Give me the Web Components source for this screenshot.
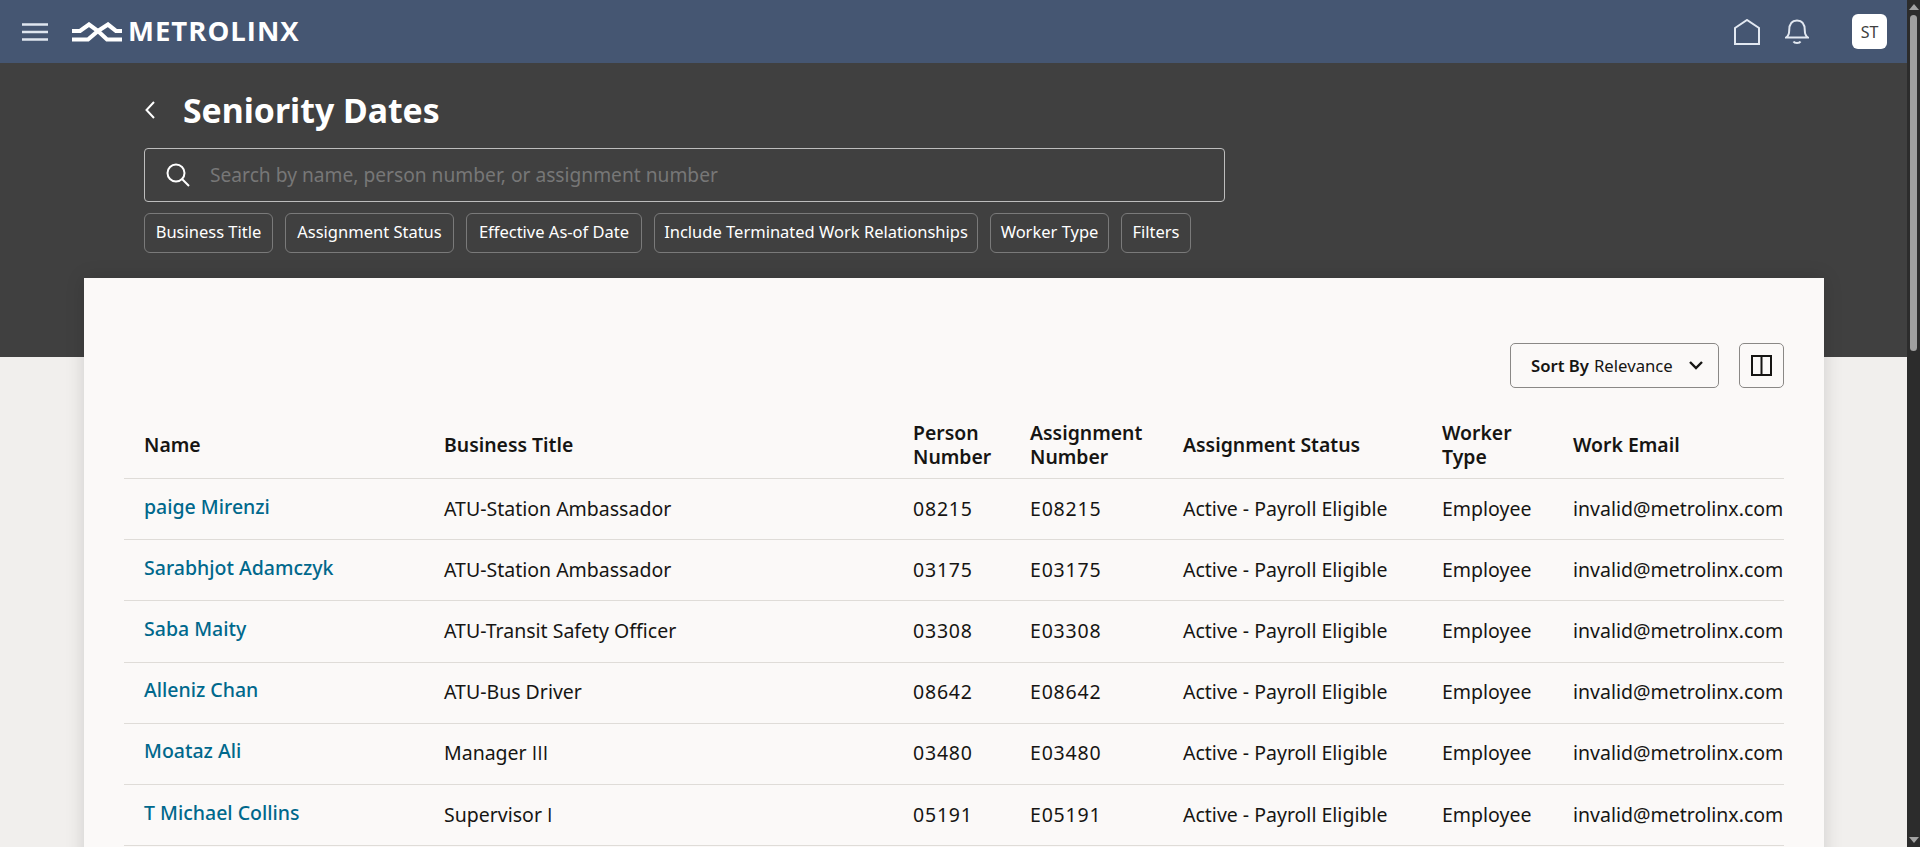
<!DOCTYPE html>
<html lang="en">
<head>
<meta charset="utf-8">
<title>Seniority Dates</title>
<style>
  html, body { margin: 0; height: 100%; overflow: hidden; }
  body { font-family: "Noto Sans", "Open Sans", sans-serif; color: #161513; background: #f1efed; }
</style>
</head>
<body>
<app-shell>
  <top-bar></top-bar>
  <page-band heading="Seniority Dates">
    <search-box placeholder="Search by name, person number, or assignment number"></search-box>
    <filter-chip width="129">Business Title</filter-chip>
    <filter-chip width="169">Assignment Status</filter-chip>
    <filter-chip width="176">Effective As-of Date</filter-chip>
    <filter-chip width="324">Include Terminated Work Relationships</filter-chip>
    <filter-chip width="119">Worker Type</filter-chip>
    <filter-chip width="70">Filters</filter-chip>
  </page-band>
  <results-card>
    <results-toolbar></results-toolbar>
    <results-table></results-table>
  </results-card>
</app-shell>

<script>
// Small helper, every element just sets its shadow markup once
class BaseEl extends HTMLElement {
    connectedCallback() {
        if (!this.shadowRoot) {
            this.attachShadow({ mode: 'open' });
            this.shadowRoot.innerHTML = this.render();
        }
    }
}

class AppShell extends BaseEl {
    render() {
        return `
            <style>
                :host { display: flex; width: 1920px; height: 847px; overflow: hidden; }
                .page { width: 1907px; height: 847px; overflow: hidden; flex: none; }
                .bar { width: 13px; flex: none; background: #2c2c2c; display: flex; flex-direction: column; align-items: center; }
                .up, .down { width: 0; height: 0; border-left: 5px solid transparent; border-right: 5px solid transparent; flex: none; }
                .up { border-bottom: 6px solid #a3a3a3; margin-top: 4px; }
                .down { border-top: 6px solid #a3a3a3; margin-top: auto; margin-bottom: 4px; }
                .thumb { width: 7px; height: 336px; margin-top: 5px; background: #9f9f9f; border-radius: 4px; }
            </style>
            <div class="page"><slot></slot></div>
            <div class="bar"><span class="up"></span><span class="thumb"></span><span class="down"></span></div>
        `;
    }
}

class TopBar extends BaseEl {
    render() {
        return `
            <style>
                :host { display: flex; align-items: center; height: 63px; background: #455672; color: #fff; padding: 0 20px 0 22px; }
                svg { display: block; flex: none; }
                .logo { margin-left: 23px; }
                .brand { margin: 0 0 2px 6px; font: 700 27.500px/1 "Open Sans", sans-serif; letter-spacing: 1px; }
                .right { margin-left: auto; display: flex; align-items: center; }
                .bell { margin-left: 25px; }
                .avatar { margin-left: 43px; width: 35px; height: 35px; border-radius: 6px; background: #fff; color: #404040;
                    display: flex; align-items: center; justify-content: center; font-size: 16px; }
            </style>
            <svg width="26" height="18" viewBox="0 0 26 18" fill="none" stroke="#dfe6f0" stroke-width="2.400"><path d="M0 1.500h26M0 9h26M0 16.500h26"/></svg>
            <svg class="logo" width="51" height="20" viewBox="0 0 51 20" fill="none" stroke="#fff" stroke-width="4.200">
                <path d="M1 9H9L18 2.500 27 9 36 17.500H51"/>
                <path d="M1 17.500H17L27 9 37 2.500 45 9H51"/>
            </svg>
            <span class="brand">METROLINX</span>
            <div class="right">
                <svg width="26" height="26" viewBox="0 0 26 26" fill="none" stroke="#e2e8f1" stroke-width="2"><path d="M1 9 13 1 25 9V25H1z"/></svg>
                <svg class="bell" width="24" height="26" viewBox="0 0 24 26" fill="none" stroke="#e2e8f1" stroke-width="2"><path d="M1 18.500c2.500-1.500 3.200-3.500 3.200-7C4.200 5 7 1.500 12 1.500s7.800 3.500 7.800 10c0 3.500.7 5.500 3.200 7z"/><path d="M8.500 22.500c1 2 6 2 7 0"/></svg>
                <div class="avatar">ST</div>
            </div>
        `;
    }
}

class PageBand extends BaseEl {
    render() {
        return `
            <style>
                :host { display: block; height: 294px; background: #404040; color: #fff; padding: 0 144px; box-sizing: border-box; }
                .head { display: flex; align-items: center; box-sizing: border-box; height: 85px; padding-top: 9px; }
                svg { display: block; margin-right: 28px; margin-left: 1px; }
                h1 { margin: 0; font-size: 33.800px; line-height: 40px; font-weight: 700; }
                .filters { display: flex; flex-wrap: wrap; gap: 11px 12px; width: 1081px; }
                ::slotted(search-box) { flex: 0 0 100%; }
            </style>
            <div class="head">
                <svg width="10" height="18" viewBox="0 0 10 18" fill="none" stroke="#fff" stroke-width="2"><path d="M9 1 1.500 9 9 17"/></svg>
                <h1>${this.getAttribute('heading')}</h1>
            </div>
            <div class="filters"><slot></slot></div>
        `;
    }
}

class SearchBox extends BaseEl {
    render() {
        return `
            <style>
                :host { display: flex; align-items: center; box-sizing: border-box; height: 54px; border: 1px solid #bdbdbd; border-radius: 4px; padding-left: 21px; }
                svg { display: block; flex: none; }
                span { margin: 0 0 1px 20px; font-size: 19.200px; color: #777; }
            </style>
            <svg width="24" height="24" viewBox="0 0 24 24" fill="none" stroke="#fff" stroke-width="2"><circle cx="10" cy="10" r="8.500"/><path d="m16 16 7 7"/></svg>
            <span>${this.getAttribute('placeholder')}</span>
        `;
    }
}

class FilterChip extends BaseEl {
    render() {
        return `
            <style>
                :host { display: flex; align-items: center; justify-content: center; box-sizing: border-box; width: ${this.getAttribute('width')}px; height: 40px; padding-bottom: 3px; border: 1px solid #7a7a7a; border-radius: 6px; font-size: 16.500px; color: #fff; white-space: nowrap; }
            </style>
            <slot></slot>
        `;
    }
}

class ResultsCard extends BaseEl {
    render() {
        return `
            <style>
                :host { display: block; position: relative; box-sizing: border-box; width: 1740px; height: 700px; margin: -79px 0 0 84px; padding: 65px 40px 0; background: #fbf9f8; box-shadow: 0 0 18px rgba(0,0,0,.14); }
            </style>
            <slot></slot>
        `;
    }
}

class ResultsToolbar extends BaseEl {
    render() {
        return `
            <style>
                :host { display: flex; justify-content: flex-end; gap: 20px; height: 45px; }
                .sort, .cols { box-sizing: border-box; height: 45px; border: 1px solid #8a8886; border-radius: 5px; display: flex; align-items: center; }
                .sort { width: 209px; padding-left: 20px; font-size: 16.700px; }
                b { font-weight: 600; margin-right: 5px; }
                .sort svg { margin-left: auto; margin-right: 15px; }
                .cols { width: 45px; justify-content: center; }
                svg { display: block; }
            </style>
            <div class="sort"><b>Sort By</b>Relevance
                <svg width="14" height="9" viewBox="0 0 14 9" fill="none" stroke="#161513" stroke-width="2.400"><path d="m1 1 6 6 6-6"/></svg>
            </div>
            <div class="cols">
                <svg width="21" height="21" viewBox="0 0 21 21" fill="none" stroke="#161513" stroke-width="2"><path d="M1 1h19v19H1zM10.500 1v19"/></svg>
            </div>
        `;
    }
}

const COLUMNS = '300px 469px 117px 153px 259px 131px 231px';
// <i> = plain capital I, Noto draws it with slabs
const PEOPLE = [
    ['paige Mirenzi', 'ATU-Station Ambassador', '08215', 'E08215'],
    ['Sarabhjot Adamczyk', 'ATU-Station Ambassador', '03175', 'E03175'],
    ['Saba Maity', 'ATU-Transit Safety Officer', '03308', 'E03308'],
    ['Alleniz Chan', 'ATU-Bus Driver', '08642', 'E08642'],
    ['Moataz Ali', 'Manager <i>III</i>', '03480', 'E03480'],
    ['T Michael Collins', 'Supervisor <i>I</i>', '05191', 'E05191']
];

class ResultsTable extends BaseEl {
    render() {
        const heads = ['Name', 'Business Title', 'Person<br>Number', 'Assignment<br>Number', 'Assignment Status', 'Worker<br>Type', 'Work Email'];
        const rows = PEOPLE.map(p => `
            <div class="row">
                <a>${p[0]}</a><span>${p[1]}</span><span class="num">${p[2]}</span><span class="num">${p[3]}</span>
                <span>Active - Payroll Eligible</span><span>Employee</span><span>invalid@metrolinx.com</span>
            </div>`).join('');
        return `
            <style>
                :host { display: block; margin-top: 22px; font-size: 19.500px; }
                .row, .head { display: grid; grid-template-columns: ${COLUMNS}; align-items: center; border-bottom: 1px solid #dfdcd8; box-sizing: border-box; }
                .head { height: 69px; padding-top: 2px; font-weight: 560; font-size: 19.400px; line-height: 24.500px; }
                .row { height: 61.200px; padding-bottom: 2px; }
                .row > *, .head > * { padding-left: 20px; white-space: nowrap; }
                .num { letter-spacing: .8px; }
                i { font: inherit; font-family: "Open Sans", sans-serif; }
                a { color: #00688c; font-weight: 500; position: relative; top: -2px; }
            </style>
            <div class="head">${heads.map(h => `<span>${h}</span>`).join('')}</div>
            ${rows}
        `;
    }
}

customElements.define('app-shell', AppShell);
customElements.define('top-bar', TopBar);
customElements.define('page-band', PageBand);
customElements.define('search-box', SearchBox);
customElements.define('filter-chip', FilterChip);
customElements.define('results-card', ResultsCard);
customElements.define('results-toolbar', ResultsToolbar);
customElements.define('results-table', ResultsTable);
</script>
</body>
</html>
